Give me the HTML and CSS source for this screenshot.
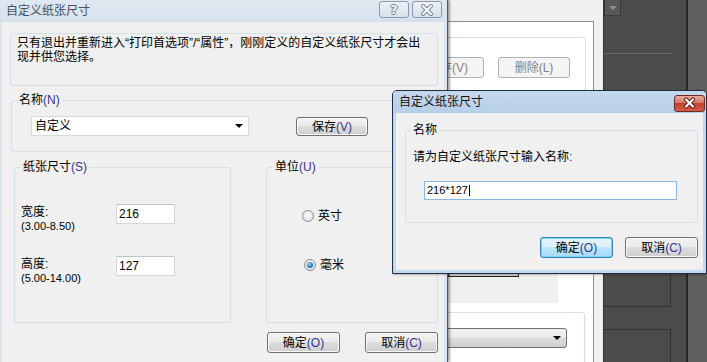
FILE: index.html
```html
<!DOCTYPE html>
<html lang="zh-CN">

<head>
    <meta charset="UTF-8">
    <title>自定义纸张尺寸</title>
    <link rel="stylesheet" href="styles.css">
</head>

<body>
    <div class="desktop">

        <!-- dark application behind -->
        <div class="app">
            <div class="app-main">
                <div class="app-drop"><span class="arrow-dim"></span></div>
                <div class="app-rule"></div>
                <div class="app-box box-a"></div>
                <div class="app-box box-b"></div>
            </div>
            <div class="app-split"></div>
            <div class="app-side"></div>
        </div>

        <!-- printer properties window behind -->
        <div class="window props">
            <div class="tab-page">
                <div class="plain-group g-top">
                    <div class="g-top-btns">
                        <div class="btn disabled">保存(V)</div>
                        <div class="btn disabled">删除(L)</div>
                    </div>
                </div>
                <div class="preview">
                    <div class="preview-btn"></div>
                </div>
                <div class="plain-group g-bottom">
                    <div class="combo-btn"><span class="arrow"></span></div>
                </div>
            </div>
        </div>

        <!-- custom paper size dialog (inactive) -->
        <div class="window dlg-main">
            <div class="caption inactive">
                <span class="caption-title">自定义纸张尺寸</span>
                <div class="cap-btns">
                    <span class="cap-btn help">?</span>
                    <span class="cap-btn">
                        <svg width="28" height="15" viewBox="0 0 28 15">
                            <path class="x-out" d="M10 4 L18 12 M18 4 L10 12" />
                            <path class="x-in" d="M10 4 L18 12 M18 4 L10 12" />
                        </svg>
                    </span>
                </div>
            </div>
            <div class="frame">
                <div class="dlg-body main-body">
                    <div class="msg">只有退出并重新进入“打印首选项”/“属性”，刚刚定义的自定义纸张尺寸才会出现并供您选择。</div>

                    <fieldset class="grp grp-name">
                        <legend>名称<span class="hk">(N)</span></legend>
                        <div class="name-row">
                            <div class="combo"><span>自定义</span><span class="arrow"></span></div>
                            <div class="btn btn-save">保存<span class="hk">(V)</span></div>
                        </div>
                    </fieldset>

                    <div class="grp-row">
                        <fieldset class="grp grp-size">
                            <legend>纸张尺寸<span class="hk">(S)</span></legend>
                            <div class="size-grid">
                                <div class="size-label">宽度:<small>(3.00-8.50)</small></div>
                                <div class="edit">216</div>
                                <div class="size-label">高度:<small>(5.00-14.00)</small></div>
                                <div class="edit">127</div>
                            </div>
                        </fieldset>
                        <fieldset class="grp grp-unit">
                            <legend>单位<span class="hk">(U)</span></legend>
                            <label class="opt opt-in"><span class="radio"></span>英寸</label>
                            <label class="opt opt-mm"><span class="radio on"></span>毫米</label>
                        </fieldset>
                    </div>

                    <div class="btn-bar">
                        <div class="btn">确定<span class="hk">(O)</span></div>
                        <div class="btn">取消<span class="hk">(C)</span></div>
                    </div>
                </div>
            </div>
        </div>

        <!-- name prompt (active) -->
        <div class="window dlg-name">
            <div class="caption active">
                <span class="caption-title">自定义纸张尺寸</span>
                <span class="close-btn">
                    <svg width="29" height="15" viewBox="0 0 29 15">
                        <path class="x-red-out" d="M11 3.5 L18 10.5 M18 3.5 L11 10.5" />
                        <path class="x-red-in" d="M11 3.5 L18 10.5 M18 3.5 L11 10.5" />
                    </svg>
                </span>
            </div>
            <div class="dlg-body name-body">
                <fieldset class="grp grp-input">
                    <legend>名称</legend>
                    <div class="prompt">请为自定义纸张尺寸输入名称<span class="hk">:</span></div>
                    <div class="edit edit-name">216*127<span class="caret"></span></div>
                </fieldset>
                <div class="btn-bar">
                    <div class="btn default">确定<span class="hk">(O)</span></div>
                    <div class="btn">取消<span class="hk">(C)</span></div>
                </div>
            </div>
        </div>

    </div>
</body>

</html>
```

FILE: styles.css
```css
body {
    margin: 0;
    font: 12px/14px "Liberation Sans", "Noto Sans CJK SC", sans-serif;
    color: #000;
}

.desktop {
    position: relative;
    width: 707px;
    height: 362px;
    overflow: hidden;
    background-color: #4b4b4b;
}

.window {
    position: absolute;
    box-sizing: border-box;
}

.hk {
    color: #34348c;
}

/* dark app */
.app {
    position: absolute;
    left: 603px;
    top: 0;
    width: 104px;
    height: 362px;
    display: flex;
}

.app-main {
    width: 83px;
    box-sizing: border-box;
    border-left: 1px solid #333;
    background-color: #4b4b4b;
}

.app-drop {
    width: 17px;
    height: 16px;
    box-sizing: border-box;
    border: 1px solid #393939;
    border-top: 0;
    background-color: #575757;
    display: flex;
    align-items: center;
    justify-content: center;
}

.arrow-dim {
    border-left: 4px solid transparent;
    border-right: 4px solid transparent;
    border-top: 4px solid #8c8c8c;
}

.app-rule {
    margin-top: 37px;
    width: 68px;
    height: 1px;
    background-color: #686868;
}

.app-box {
    width: 67px;
    box-sizing: border-box;
    border: 1px solid #313131;
    border-left: 0;
}

.box-a {
    margin-top: 146px;
    height: 107px;
}

.box-b {
    margin-top: 22px;
    height: 60px;
}

.app-split {
    width: 2px;
    background-color: #262626;
}

.app-side {
    flex: 1;
    background-color: #5e5e5e;
}

/* properties window */
.props {
    left: 380px;
    top: 0;
    width: 223px;
    height: 362px;
    background-color: #f0f0f0;
}

.tab-page {
    margin: 21px 9px 0 20px;
    height: 360px;
    box-sizing: border-box;
    background-color: #fff;
    border: 1px solid #898c95;
}

.plain-group {
    box-sizing: border-box;
    border: 1px solid #d5dfe5;
    border-radius: 3px;
}

.g-top {
    margin: 15px 7px 0 10px;
    height: 150px;
}

.g-top-btns {
    display: flex;
    justify-content: flex-end;
    gap: 14px;
    padding: 19px 15px 0 0;
}

.g-top-btns .btn {
    width: 72px;
    height: 21px;
}

.preview {
    margin: 43px 0 0 20px;
    width: 137px;
    height: 73px;
    background-color: #f0f0f0;
}

.preview-btn {
    margin-left: 27px;
    width: 71px;
    height: 47px;
    box-sizing: border-box;
    border: 1px solid #222;
    background-color: #d6d3c9;
}

.g-bottom {
    margin: 9px 8px 0 10px;
    height: 100px;
    padding: 15px 17px 0 0;
    display: flex;
    justify-content: flex-end;
}

.combo-btn {
    width: 136px;
    height: 20px;
    box-sizing: border-box;
    border: 1px solid #707070;
    border-radius: 3px;
    background: linear-gradient(#f2f2f2, #ebebeb 45%, #dddddd 50%, #cfcfcf);
    display: flex;
    align-items: center;
    justify-content: flex-end;
    padding-right: 5px;
}

.arrow {
    border-left: 4px solid transparent;
    border-right: 4px solid transparent;
    border-top: 4px solid #000;
}

/* captions */
.caption {
    height: 22px;
    display: flex;
    align-items: flex-start;
}

.caption-title {
    line-height: 22px;
}

.caption.inactive {
    padding: 0 5px 0 6px;
    background: linear-gradient(#e0e8f1, #d7e1ec);
    color: #46515e;
}

.caption.active {
    padding: 0 1px 0 6px;
    background: linear-gradient(#c4d8ee, #b8cfe9);
    color: #111;
}

.cap-btns {
    margin-left: auto;
    margin-top: 1px;
    display: flex;
    gap: 3px;
}

.cap-btn {
    width: 30px;
    height: 17px;
    box-sizing: border-box;
    border: 1px solid #8d9aab;
    border-radius: 3px;
    background: linear-gradient(#eef2f6, #d8e0ea);
    display: flex;
    align-items: center;
    justify-content: center;
}

.cap-btn.help {
    font: bold 13px/15px "DejaVu Sans", sans-serif;
    color: #f6f8fa;
    text-shadow: 1px 0 #76818f, -1px 0 #76818f, 0 1px #76818f, 0 -1px #76818f;
}

.x-out {
    stroke: #7a8594;
    stroke-width: 4;
    stroke-linecap: round;
    fill: none;
}

.x-in {
    stroke: #fff;
    stroke-width: 2;
    stroke-linecap: round;
    fill: none;
}

.close-btn {
    margin: 4px 0 0 auto;
    width: 31px;
    height: 17px;
    box-sizing: border-box;
    border: 1px solid #6d2a22;
    border-radius: 3px;
    background: linear-gradient(#e9aa9c, #d5796a 45%, #c2412e 50%, #d35d45);
    display: flex;
    align-items: center;
    justify-content: center;
}

.x-red-out {
    stroke: #5a1d15;
    stroke-width: 4.2;
    stroke-linecap: round;
    fill: none;
}

.x-red-in {
    stroke: #fff;
    stroke-width: 2.2;
    stroke-linecap: round;
    fill: none;
}

/* main dialog */
.dlg-main {
    left: 0;
    top: 0;
    width: 448px;
    height: 362px;
    border-right: 1px solid #4f5864;
    background-color: #dbe4ee;
    box-shadow: 2px 0 2px rgba(0, 0, 0, 0.35);
}

.frame {
    padding: 0 3px 0 2px;
    height: 340px;
}

.dlg-body {
    box-sizing: border-box;
    background-color: #f0f0f0;
}

.main-body {
    height: 100%;
    padding: 11px 6px 0 8px;
}

.msg {
    box-sizing: border-box;
    height: 53px;
    border: 1px solid #d5dfe5;
    border-radius: 3px;
    padding: 2px 12px 0 6px;
}

.grp {
    margin: 0;
    min-width: 0;
    box-sizing: border-box;
    border: 1px solid #d5dfe5;
    border-radius: 3px;
}

.grp legend {
    padding: 0 2px;
    line-height: 14px;
}

.grp-name {
    margin: 7px 1px 0 1px;
    padding: 9px 0 15px 5px;
}

.name-row {
    display: flex;
    align-items: flex-start;
    margin-left: 14px;
}

.combo {
    width: 218px;
    height: 20px;
    box-sizing: border-box;
    border: 1px solid #d9d9d9;
    background-color: #fff;
    padding: 0 5px 0 3px;
    display: flex;
    align-items: center;
    justify-content: space-between;
}

.btn {
    box-sizing: border-box;
    border: 1px solid #707070;
    border-radius: 3px;
    background: linear-gradient(#f2f2f2, #ebebeb 45%, #dddddd 50%, #cfcfcf);
    box-shadow: inset 0 0 0 1px #fbfbfb;
    display: flex;
    align-items: center;
    justify-content: center;
}

.btn.disabled {
    border-color: #adb2b5;
    background: #f4f4f4;
    box-shadow: none;
    color: #838383;
}

.btn.default {
    border-color: #3c7fb1;
    background: linear-gradient(#eaf6fd, #d9f0fc 45%, #bee6fd 50%, #a7d9f5);
    box-shadow: inset 0 0 0 1px #74d6f8;
}

.btn-save {
    margin: 1px 0 0 47px;
    width: 72px;
    height: 19px;
}

.grp-row {
    display: flex;
    gap: 35px;
    margin: 8px 0 0 4px;
}

.grp-size {
    width: 217px;
    height: 163px;
    padding: 30px 0 0 6px;
}

.grp-unit {
    width: 172px;
    height: 163px;
    padding: 0 0 0 6px;
}

.size-grid {
    display: grid;
    grid-template-columns: 95px 59px;
    row-gap: 22px;
    align-items: start;
}

.size-label {
    margin-top: 1px;
}

.size-label small {
    display: block;
    font-size: 11px;
    line-height: 15px;
}

.edit {
    box-sizing: border-box;
    height: 20px;
    background-color: #fff;
    border: 1px solid #d6d6d6;
    border-top-color: #c4c4c4;
    padding: 0 2px;
    line-height: 18px;
}

.opt {
    display: flex;
    align-items: center;
    height: 14px;
}

.opt-in {
    margin: 35px 0 0 29px;
}

.opt-mm {
    margin: 35px 0 0 31px;
}

.radio {
    width: 12px;
    height: 12px;
    margin-right: 4px;
    box-sizing: border-box;
    border: 1px solid #8e8f8f;
    border-radius: 50%;
    background: radial-gradient(circle at 50% 40%, #fff, #d4d4d4);
    display: flex;
    align-items: center;
    justify-content: center;
}

.radio.on::after {
    content: "";
    width: 6px;
    height: 6px;
    border-radius: 50%;
    background: radial-gradient(circle at 40% 35%, #9fdcff, #1b73b8 60%, #0d4a82);
}

.btn-bar {
    display: flex;
    justify-content: flex-end;
    gap: 25px;
    margin-top: 9px;
}

.btn-bar .btn {
    width: 73px;
    height: 21px;
}

/* name prompt */
.dlg-name {
    left: 392px;
    top: 90px;
    width: 315px;
    height: 184px;
    border: 1px solid #1f2e40;
    border-radius: 5px 5px 0 0;
    background-color: #c4d9ef;
    box-shadow: 1px 1px 2px rgba(0, 0, 0, 0.25);
    overflow: hidden;
}

.name-body {
    margin: 0 3px;
    height: 157px;
    padding: 10px 5px 0 9px;
}

.grp-input {
    padding: 13px 0 22px 5px;
}

.prompt {
    margin-left: 2px;
}

.edit-name {
    width: 253px;
    height: 19px;
    margin: 17px 0 0 13px;
    border-color: #8cb7e3;
    font-size: 11px;
    line-height: 17px;
}

.caret {
    display: inline-block;
    width: 1px;
    height: 11px;
    margin-left: 1px;
    background-color: #000;
    vertical-align: -2px;
}

.name-body .btn-bar {
    gap: 12px;
    margin-top: 14px;
}
```
